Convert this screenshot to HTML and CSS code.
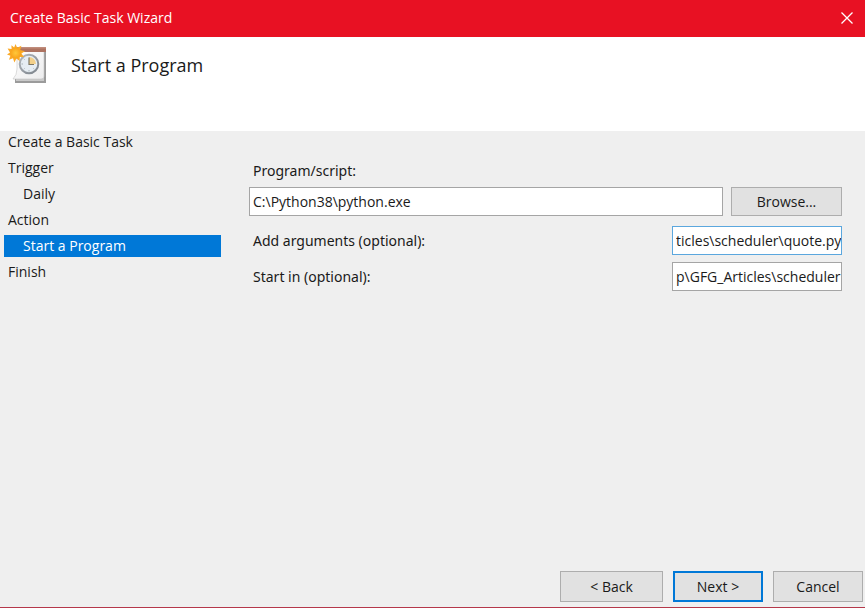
FILE: index.html
```
<!DOCTYPE html>
<html lang="en">
<head>
  <meta charset="UTF-8" />
  <meta name="viewport" content="width=device-width, initial-scale=1.0"/>
  <title>Create Basic Task Wizard</title>
  <link rel="stylesheet" href="styles.css">
</head>
<body>

  <div class="titlebar">
    <span>Create Basic Task Wizard</span>
    <button class="close-btn" type="button" aria-label="Close">
      <svg width="12" height="12" viewBox="0 0 12 12"><path d="M0.5 0.5L11.5 11.5M11.5 0.5L0.5 11.5" stroke="#fff" stroke-width="1.3"/></svg>
    </button>
  </div>

  <header class="header">
    <svg class="task-icon" width="42" height="42" viewBox="0 0 42 42">
      <defs>
        <linearGradient id="page" x1="0" y1="0" x2="1" y2="1">
          <stop offset="0" stop-color="#ffffff"/>
          <stop offset="1" stop-color="#ececed"/>
        </linearGradient>
        <linearGradient id="rim" x1="0" y1="0" x2="1" y2="1">
          <stop offset="0" stop-color="#b4b9be"/>
          <stop offset="1" stop-color="#7b828a"/>
        </linearGradient>
        <radialGradient id="sun">
          <stop offset="0" stop-color="#ffc83a"/>
          <stop offset="1" stop-color="#f9a21a"/>
        </radialGradient>
      </defs>
      <!-- calendar pages -->
      <path d="M8 34H37V8H39V39H8Z" fill="#9b9b9b"/>
      <path d="M9 34H37V37H9Z" fill="#c9c9c9"/>
      <path d="M10 7H37V32Q37 35 34 35H6Q10 31 10 25Z" fill="url(#page)" stroke="#c4c4c4" stroke-width="0.6"/>
      <path d="M10 3H39V8H10Z" fill="#ad7361"/>
      <path d="M10 3H39V4.5H10Z" fill="#c08c7b"/>
      <!-- clock -->
      <circle cx="22" cy="20" r="9.3" fill="#e6edf3" stroke="url(#rim)" stroke-width="2"/>
      <path d="M22 20V13A7 7 0 0 1 29 20Z" fill="#f3d08a"/>
      <path d="M22 13.5V20.5H27" fill="none" stroke="#7d7766" stroke-width="1.2"/>
      <path d="M22 26V27.5M14.5 20H16M16.7 14.7L17.6 15.6M16.7 25.3L17.6 24.4M27.3 25.3L26.4 24.4" stroke="#a3abb1" stroke-width="0.9"/>
      <!-- sun -->
      <path d="M8.5 0L10.2 3.8L14.4 1.8L13.2 6L18 7.2L14.4 9.6L17 13L12.8 13L12.6 17L9.4 14.6L7.4 18.4L6 14.2L2 15.8L3.4 11.8L0 10.4L3 8.4L0.6 4.6L4.6 5L4.4 1.2L7.2 3.6Z" fill="#faa927"/>
      <circle cx="8.6" cy="9" r="5.4" fill="url(#sun)"/>
    </svg>
    <h1>Start a Program</h1>
  </header>

  <main class="wizard">
    <ul class="steps">
      <li>Create a Basic Task</li>
      <li>Trigger</li>
      <li class="sub">Daily</li>
      <li>Action</li>
      <li class="sub selected" aria-current="step">Start a Program</li>
      <li>Finish</li>
    </ul>

    <form class="settings">
      <label for="program">Program/script:</label>
      <div class="program-row">
        <input id="program" type="text" value="C:\Python38\python.exe">
        <button class="btn" type="button">Browse...</button>
      </div>
      <div class="option-row">
        <label for="arguments">Add arguments (optional):</label>
        <input id="arguments" class="active" type="text" value="ticles\scheduler\quote.py">
      </div>
      <div class="option-row">
        <label for="startIn">Start in (optional):</label>
        <input id="startIn" type="text" value="p\GFG_Articles\scheduler">
      </div>
    </form>
  </main>

  <footer class="footer">
    <button class="btn back" type="button">&lt; Back</button>
    <button class="btn default" type="button">Next &gt;</button>
    <button class="btn" type="button">Cancel</button>
  </footer>

</body>
</html>
```
FILE: styles.css
```
* {
  box-sizing: border-box;
}
body {
  margin: 0;
  min-height: 100vh;
  display: flex;
  flex-direction: column;
  font-family: "Open Sans", "Noto Sans", sans-serif;
  font-size: 14px;
  line-height: 22px;
  color: #1a1a1a;
  background-color: #efefef;
  border-bottom: 1px solid #b5384a;
}
.titlebar {
  display: flex;
  align-items: center;
  justify-content: space-between;
  height: 37px;
  padding: 0 12px 2px 10px;
  color: #fff;
  background-color: #e81123;
}
.close-btn {
  display: flex;
  padding: 0;
  border: none;
  background: none;
}
.header {
  display: flex;
  gap: 22px;
  height: 94px;
  padding: 7px 7px 0;
  background-color: #fff;
}
h1 {
  margin: 8px 0 0;
  font-size: 18px;
  font-weight: normal;
  line-height: 26px;
}
.wizard {
  flex: 1;
  display: flex;
  gap: 28px;
}
.steps {
  display: flex;
  flex-direction: column;
  gap: 4px;
  width: 221px;
  margin: 0;
  padding: 0 0 0 4px;
  list-style: none;
}
.steps li {
  padding-left: 4px;
}
.steps .sub {
  padding-left: 19px;
}
.steps .selected {
  color: #fff;
  background-color: #0078d7;
}
.settings {
  flex: 1;
  display: flex;
  flex-direction: column;
  gap: 7px;
  padding: 29px 23px 0 0;
}
.settings label {
  padding-left: 4px;
  font-family: "Noto Sans", "Open Sans", sans-serif;
}
.program-row {
  display: flex;
  gap: 8px;
  margin: -2px 0 3px;
}
.program-row input {
  flex: 1;
}
.program-row .btn {
  width: 111px;
}
.option-row {
  display: flex;
  align-items: center;
  justify-content: space-between;
}
.option-row input {
  width: 170px;
}
input {
  height: 29px;
  padding: 0 0 0 3px;
  font: inherit;
  color: inherit;
  background-color: #fff;
  border: 1px solid #a5a5a5;
}
input.active {
  border-color: #5ba7de;
}
.btn {
  height: 29px;
  padding: 0;
  font: inherit;
  color: inherit;
  background-color: #e1e1e1;
  border: 1px solid #adadad;
}
.btn.default {
  border: 2px solid #0078d7;
}
.footer {
  display: flex;
  justify-content: flex-end;
  gap: 10px;
  padding: 0 2px 5px;
}
.footer .btn {
  width: 90px;
  height: 31px;
}
.footer .back {
  width: 103px;
}
```
